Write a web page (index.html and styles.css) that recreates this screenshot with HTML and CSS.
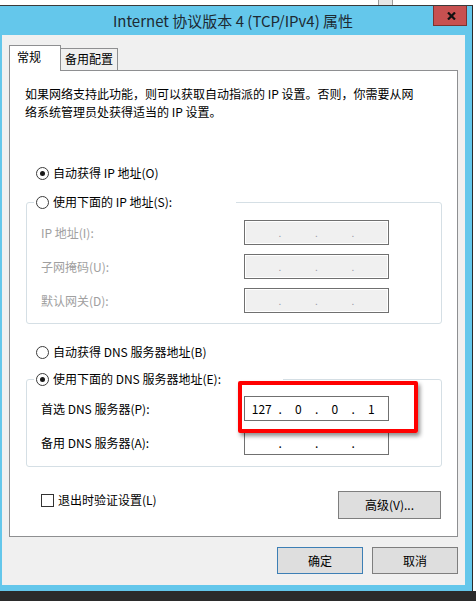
FILE: index.html
```html
<!DOCTYPE html>
<html lang="zh-CN">
<head>
<meta charset="utf-8">
<title>Internet 协议版本 4 (TCP/IPv4) 属性</title>
<link rel="stylesheet" href="styles.css">
</head>
<body>
<div class="screen">
  <div class="topstrip"><div class="stub"></div></div>
  <div class="window">
    <div class="titlebar">
      <span class="title">Internet 协议版本 4 (TCP/IPv4) 属性</span>
      <div class="close"><svg width="9" height="8" viewBox="0 0 9 8"><path d="M1 0.5 L8 7.5 M8 0.5 L1 7.5" stroke="#111" stroke-width="2.2" fill="none"/></svg></div>
    </div>
    <div class="panel">
      <div class="tabs">
        <div class="tab active">常规</div>
        <div class="tab">备用配置</div>
      </div>
      <div class="tabbody">
        <p class="desc">如果网络支持此功能，则可以获取自动指派的 IP 设置。否则，你需要从网<br>络系统管理员处获得适当的 IP 设置。</p>
        <div class="radio-row r1"><span class="radio checked"></span><span>自动获得 IP 地址(O)</span></div>
        <fieldset class="group g1">
          <legend><span class="radio"></span><span>使用下面的 IP 地址(S):</span></legend>
          <div class="grid">
            <span class="lbl off">IP 地址(I):</span>
            <div class="ip off"><span class="seg"></span><span class="dot">.</span><span class="seg"></span><span class="dot">.</span><span class="seg"></span><span class="dot">.</span><span class="seg"></span></div>
            <span class="lbl off">子网掩码(U):</span>
            <div class="ip off"><span class="seg"></span><span class="dot">.</span><span class="seg"></span><span class="dot">.</span><span class="seg"></span><span class="dot">.</span><span class="seg"></span></div>
            <span class="lbl off">默认网关(D):</span>
            <div class="ip off"><span class="seg"></span><span class="dot">.</span><span class="seg"></span><span class="dot">.</span><span class="seg"></span><span class="dot">.</span><span class="seg"></span></div>
          </div>
        </fieldset>
        <div class="radio-row r3"><span class="radio"></span><span>自动获得 DNS 服务器地址(B)</span></div>
        <fieldset class="group g2">
          <legend><span class="radio checked"></span><span>使用下面的 DNS 服务器地址(E):</span></legend>
          <div class="grid">
            <span class="lbl">首选 DNS 服务器(P):</span>
            <div class="ip"><span class="seg">127</span><span class="dot">.</span><span class="seg">0</span><span class="dot">.</span><span class="seg">0</span><span class="dot">.</span><span class="seg">1</span></div>
            <span class="lbl">备用 DNS 服务器(A):</span>
            <div class="ip"><span class="seg"></span><span class="dot">.</span><span class="seg"></span><span class="dot">.</span><span class="seg"></span><span class="dot">.</span><span class="seg"></span></div>
          </div>
        </fieldset>
        <div class="bottom-row">
          <div class="check-row"><span class="checkbox"></span><span>退出时验证设置(L)</span></div>
          <div class="btn adv">高级(V)...</div>
        </div>
      </div>
      <div class="footer">
        <div class="btn default">确定</div>
        <div class="btn">取消</div>
      </div>
    </div>
  </div>
  <div class="taskbar"></div>
  <div class="redbox"></div>
</div>
</body>
</html>
```
FILE: styles.css
```css
* { box-sizing: border-box; }
html, body { margin: 0; padding: 0; }
body {
  width: 476px;
  height: 601px;
  overflow: hidden;
  background: #ffffff;
  font-family: "Noto Sans CJK SC", sans-serif;
  font-size: 12px;
  color: #000;
}
.screen {
  position: relative;
  width: 476px;
  height: 601px;
  display: flex;
  flex-direction: column;
}
.topstrip {
  height: 5px;
  position: relative;
  display: flex;
}
.stub {
  margin-left: 378px;
  width: 15px;
  height: 5px;
  background: #e6e6e6;
  border-left: 1px solid #9a9a9a;
  border-right: 1px solid #9a9a9a;
}
.window {
  width: 473px;
  height: 586px;
  background: #64c7eb;
  border-top: 1px solid #3a3a3a;
  border-right: 1px solid #2b2b2b;
  display: flex;
  flex-direction: column;
}
.titlebar {
  position: relative;
  height: 29px;
  display: flex;
  justify-content: center;
  padding-right: 6px;
}
.title {
  font-size: 15px;
  line-height: 29px;
  color: #1d2a33;
  white-space: nowrap;
}
.close {
  position: absolute;
  right: 5px;
  top: 0;
  width: 34px;
  height: 20px;
  background: #c75050;
  border: 1px solid #7b3330;
  border-top: none;
  display: flex;
  align-items: center;
  justify-content: center;
  padding-left: 2px;
}
.panel {
  margin-left: 2px;
  width: 463px;
  height: 550px;
  background: #f0f0f0;
  padding: 10px 7px 0 7px;
}
.tabs {
  display: flex;
  align-items: flex-end;
  height: 25px;
}
.tab {
  height: 22px;
  border: 1px solid #8e8f91;
  border-bottom: none;
  background: #f0f0f0;
  line-height: 18px;
  padding: 1px 0 0 4px;
  width: 58px;
  margin-left: -1px;
  white-space: nowrap;
}
.tab.active {
  position: relative;
  z-index: 2;
  height: 26px;
  margin-bottom: -1px;
  margin-left: 0;
  width: 52px;
  background: #ffffff;
  padding: 2px 0 0 7px;
}
.tabbody {
  position: relative;
  z-index: 1;
  width: 449px;
  height: 467px;
  background: #ffffff;
  border: 1px solid #8e8f91;
  padding: 0 15px;
}
.desc {
  margin: 14px 0 0 0;
  line-height: 18px;
  white-space: nowrap;
}
.radio-row, legend, .check-row {
  display: flex;
  align-items: center;
  gap: 4px;
  height: 18px;
  line-height: 18px;
  white-space: nowrap;
}
.radio {
  flex: none;
  width: 13px;
  height: 13px;
  border: 1px solid #3b3b3b;
  border-radius: 50%;
  background: #fff;
  position: relative;
}
.radio.checked::after {
  content: "";
  position: absolute;
  left: 3px;
  top: 3px;
  width: 5px;
  height: 5px;
  border-radius: 50%;
  background: #1a1a1a;
}
.r1 { margin: 43px 0 0 11px; }
.r3 { margin: 19px 0 0 11px; }
.group {
  margin: 0 0 0 1px;
  width: 416px;
  min-width: 0;
  border: 1px solid #d5dfe5;
  border-radius: 3px;
  padding: 9px 0 10px 7px;
}
.g1 { margin-top: 11px; }
.g2 { margin-top: 9px; padding-top: 8px; padding-bottom: 11px; }
legend {
  padding: 0 0 0 2px;
  width: 202px;
}
.g2 legend { width: 249px; }
.grid {
  margin-left: 7px;
  display: grid;
  grid-template-columns: 203px 145px;
  grid-auto-rows: 25px;
  row-gap: 9px;
  align-items: center;
}
.lbl { line-height: 18px; white-space: nowrap; }
.lbl.off { color: #a0a0a0; }
.ip {
  height: 25px;
  border: 1px solid #707070;
  background: #ffffff;
  display: flex;
  align-items: center;
  font-size: 12px;
  line-height: 18px;
}
.ip.off {
  background: #f0f0f0;
  box-shadow: inset 0 0 0 1px #ffffff;
  color: #9a9aa8;
}
.seg {
  flex: 1;
  text-align: center;
}
.dot {
  width: 3px;
  text-align: center;
}
.ip.off .dot { font-size: 10px; }
.bottom-row {
  margin-top: 24px;
  display: flex;
  justify-content: space-between;
  align-items: flex-start;
}
.check-row { margin-left: 16px; }
.checkbox {
  width: 13px;
  height: 13px;
  border: 1px solid #333333;
  background: #fff;
}
.btn {
  width: 86px;
  height: 27px;
  background: #dedede;
  border: 1px solid #7e7e7e;
  display: flex;
  align-items: center;
  justify-content: center;
  line-height: 18px;
}
.btn.adv {
  width: 103px;
  height: 28px;
  margin-right: 1px;
}
.btn.default { border-color: #3d7fb5; }
.footer {
  margin-top: 10px;
  width: 449px;
  display: flex;
  justify-content: flex-end;
  gap: 9px;
}
.taskbar {
  flex: 1;
  background: #2b2b2b;
}
.redbox {
  position: absolute;
  z-index: 10;
  left: 238px;
  top: 381px;
  width: 180px;
  height: 52px;
  border: 4px solid #ff0000;
  border-radius: 2px;
  box-shadow: 2px 3px 4px rgba(0, 0, 0, 0.45);
}
```
